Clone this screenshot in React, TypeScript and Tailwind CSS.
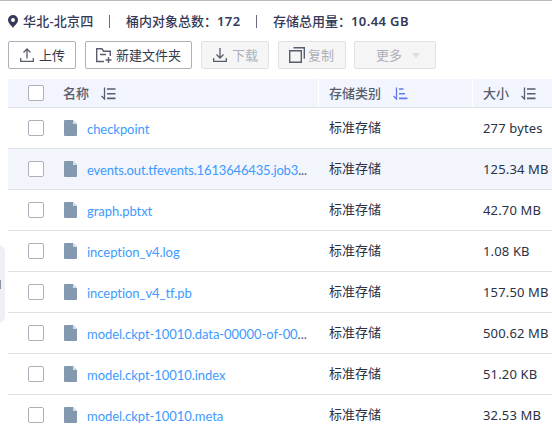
import type { ReactNode } from 'react';

type SortProps = { active?: boolean };

function SortIcon({ active = false }: SortProps) {
  return (
    <svg width="15" height="13" viewBox="0 0 15 13" fill="none" className={active ? 'text-[#5e7ce8]' : 'text-[#575d70]'}>
      <path d="M3.500.500v11.500L.5 9" stroke="currentColor" strokeWidth="1.3" />
      <path
        d={active ? 'M6 2h4.500M6 6.700h6M6 11.400h8.500' : 'M6 2h8.500M6 6.700h8.500M6 11.400h8.500'}
        stroke="currentColor"
        strokeWidth="1.6"
      />
    </svg>
  );
}

function FileIcon() {
  return (
    <svg width="13" height="16" viewBox="0 0 13 16" className="shrink-0">
      <path d="M1 0h8l4 4v11a1 1 0 0 1-1 1H1a1 1 0 0 1-1-1V1a1 1 0 0 1 1-1z" fill="#8399b0" />
      <path d="M9 0l4 4H9z" fill="#d5dee7" />
    </svg>
  );
}

function Checkbox() {
  return <span className="block size-4 shrink-0 rounded-[2px] border border-[#adb0b8] bg-white" />;
}

function ToolButton({ className, disabled, children }: { className: string; disabled?: boolean; children: ReactNode }) {
  return (
    <button
      disabled={disabled}
      className={`flex h-7 shrink-0 items-center rounded-[2px] border text-[13px] leading-none ${
        disabled ? 'border-[#dfe1e6] bg-[#f5f5f6] text-[#adb0b8]' : 'border-[#adb0b8] bg-white text-[#343a4d]'
      } ${className}`}
    >
      {children}
    </button>
  );
}

const files = [
  { name: 'checkpoint', size: '277 bytes' },
  { name: 'events.out.tfevents.1613646435.job3', cut: true, tight: true, size: '125.34 MB' },
  { name: 'graph.pbtxt', size: '42.70 MB' },
  { name: 'inception_v4.log', size: '1.08 KB' },
  { name: 'inception_v4_tf.pb', size: '157.50 MB' },
  { name: 'model.ckpt-10010.data-00000-of-00', cut: true, size: '500.62 MB' },
  { name: 'model.ckpt-10010.index', size: '51.20 KB' },
  { name: 'model.ckpt-10010.meta', size: '32.53 MB' },
];

export default function App() {
  return (
    <div className="relative h-[434px] w-[552px] overflow-hidden border-t border-[#b9bbbb] bg-white pl-2 font-['Noto_Sans','Noto_Sans_CJK_SC',sans-serif] text-[13px] text-[#2b3144]">
      <div className="absolute top-[244px] -left-2 flex h-[78px] w-[13px] items-center rounded-[8px] bg-[#eff0f5]">
        <span className="ml-2 h-[9px] w-px bg-[#8d91a0]" />
      </div>

      <div className="flex h-10 items-center whitespace-nowrap font-medium leading-5 text-[#343a58]">
        <svg width="10" height="13" viewBox="0 0 10 13" className="mr-[5px]">
          <path fillRule="evenodd" d="M5 0a5 5 0 0 1 5 5c0 3-3.500 5.500-5 8C3.500 10.500 0 8 0 5a5 5 0 0 1 5-5zm0 3a2 2 0 1 0 0 4 2 2 0 0 0 0-4z" fill="#343a58" />
        </svg>
        <span className="w-[86px] tracking-[0.2px]">华北-北京四</span>
        <span className="h-[13px] w-px bg-[#686d83]" />
        <span className="ml-4 w-[91px]">桶内对象总数：</span>
        <span className="w-[39px] font-semibold tracking-[0.4px]">172</span>
        <span className="h-[13px] w-px bg-[#686d83]" />
        <span className="ml-4 w-[78px]">存储总用量：</span>
        <span className="font-semibold tracking-[0.4px]">10.44 GB</span>
      </div>

      <div className="flex h-7">
        <ToolButton className="w-[68px] pl-[11px]">
          <svg width="14" height="14" viewBox="0 0 14 14" fill="none" stroke="#575d6c" strokeWidth="1.3" className="mr-[5px]">
            <path d="M.7 10v3.300h12.600V10M7 10.500V1M3.500 4.500L7 1l3.500 3.500" />
          </svg>
          上传
        </ToolButton>
        <ToolButton className="ml-[9px] w-[107px] pl-[10px]">
          <svg width="16" height="15" viewBox="0 0 16 15" fill="none" stroke="#575d6c" strokeWidth="1.4" className="mr-[4px]">
            <path d="M8 13.500H.7V.7H6l1.500 2.500h6.800V8M4 6.500h6M12.500 9v6M9.500 12h6" />
          </svg>
          新建文件夹
        </ToolButton>
        <ToolButton disabled className="ml-[9px] w-[68px] pl-[11px]">
          <svg width="14" height="14" viewBox="0 0 14 14" fill="none" stroke="#575d6c" strokeWidth="1.3" className="mr-[5px]">
            <path d="M.7 10v3.300h12.600V10M7 0v9.800M3.500 6.500L7 10l3.500-3.500" />
          </svg>
          下载
        </ToolButton>
        <ToolButton disabled className="ml-[9px] w-[68px] pl-[10px]">
          <svg width="16" height="16" viewBox="0 0 16 16" fill="none" stroke="#575d6c" strokeWidth="1.4" className="mr-[3px]">
            <path d="M.7 3.700h11.600v11.600H.7zM4.500.7h10.800v11" />
          </svg>
          复制
        </ToolButton>
        <ToolButton disabled className="ml-2 w-[82px] pl-[21px]">
          更多
          <svg width="8" height="5" viewBox="0 0 8 5" className="ml-[10px]">
            <path d="M0 0h8L4 5z" fill="#dbdee6" />
          </svg>
        </ToolButton>
      </div>

      <div className="mt-[10px] w-full">
        <div className="grid h-[29px] grid-cols-[311px_154px_1fr] border-b border-[#dfe1e6] bg-[#f2f5fe] font-medium text-[#575d6c]">
          <div className="flex items-center border-r border-white pl-5">
            <Checkbox />
            <span className="ml-[19px] leading-none">名称</span>
            <span className="ml-3"><SortIcon /></span>
          </div>
          <div className="flex items-center border-r border-white pl-[10px]">
            <span className="leading-none">存储类别</span>
            <span className="ml-3"><SortIcon active /></span>
          </div>
          <div className="flex items-center pl-[10px]">
            <span className="leading-none">大小</span>
            <span className="ml-3"><SortIcon /></span>
          </div>
        </div>

        {files.map((file, i) => (
          <div
            key={file.name}
            className={`grid h-[41px] grid-cols-[311px_154px_1fr] whitespace-nowrap border-b border-[#dfe1e6] ${i === 1 ? 'bg-[#f2f5fc]' : 'bg-white'}`}
          >
            <div className="flex items-center pl-5">
              <Checkbox />
              <span className="ml-5"><FileIcon /></span>
              <span
                className={`ml-[10px] pt-[3px] font-['Lato','Noto_Sans_CJK_SC',sans-serif] text-[#3d9aff] ${
                  file.tight ? 'tracking-[-0.15px]' : 'tracking-[-0.05px]'
                }`}
              >
                {file.name}
                {file.cut && <span className="text-[#575d6c]">...</span>}
              </span>
            </div>
            <div className="flex items-center pl-[10px]">标准存储</div>
            <div className="flex items-center pl-[10px] pt-px tracking-[0.15px]">{file.size}</div>
          </div>
        ))}
      </div>
    </div>
  );
}
